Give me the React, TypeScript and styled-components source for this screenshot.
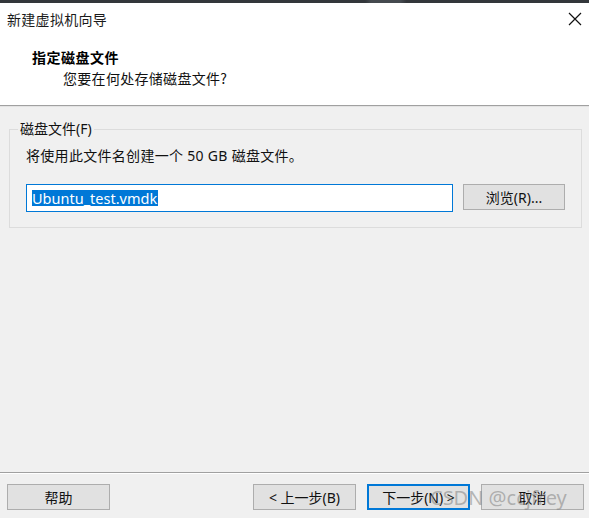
import React from "react";
import styled, { createGlobalStyle } from "styled-components";

const Global = createGlobalStyle`
  html, body { margin: 0; padding: 0; background: #f0f0f0; }
  body { font-family: "Noto Sans", "Noto Sans CJK SC", sans-serif; font-size: 14px; color: #000; }
  * { box-sizing: border-box; }
`;

const Window = styled.div`
  width: 589px;
  height: 518px;
  display: flex;
  flex-direction: column;
  background: #f0f0f0;
  position: relative;
  overflow: hidden;
`;

const TopEdge = styled.div`
  height: 3px;
  background: linear-gradient(90deg, #33373b 0%, #33373b 62%, #454a4f 63%, #454a4f 68%, #33373b 69%, #33373b 100%);
`;

const Top = styled.div`
  background: #fff;
  border-bottom: 1px solid #a0a0a0;
  box-shadow: 0 1px 0 #e3e3e3;
`;

const TitleBar = styled.div`
  height: 34px;
  display: flex;
  align-items: center;
  justify-content: space-between;
  padding: 0 7px 2px 7px;
`;

const TitleText = styled.span`
  font-family: "Noto Sans CJK SC", sans-serif;
  font-size: 14px;
  letter-spacing: 0.3px;
  color: #1a1a1a;
`;

const Close = styled.span`
  display: flex;
  width: 14px;
  height: 14px;
`;

const Header = styled.div`
  padding: 10px 0 16px 32px;
  display: flex;
  flex-direction: column;
`;

const HeaderTitle = styled.div`
  font-family: "Noto Sans CJK SC", sans-serif;
  font-weight: 700;
  font-size: 14px;
  line-height: 21px;
  letter-spacing: 0.5px;
`;

const HeaderSub = styled.div`
  font-family: "Noto Sans CJK SC", sans-serif;
  font-size: 14px;
  line-height: 21px;
  padding-left: 31px;
  letter-spacing: 0.3px;
  color: #111;
`;

const Body = styled.div`
  flex: 1;
  padding-top: 12px;
  border-bottom: 1px solid #a0a0a0;
  box-shadow: 0 1px 0 #fff;
`;

const Group = styled.fieldset`
  margin: 0 7px 0 9px;
  padding: 0 16px 15px 16px;
  border: 1px solid #dcdcdc;
  min-width: 0;
`;

const Legend = styled.legend`
  font-family: "Noto Sans", "Noto Sans CJK SC", sans-serif;
  font-size: 14px;
  line-height: 22px;
  padding: 0 2px;
  margin-left: -8px;
  color: #111;
`;

const Description = styled.div`
  margin-top: 6px;
  line-height: 20px;
  font-family: "Noto Sans", "Noto Sans CJK SC", sans-serif;
  letter-spacing: 0.3px;
  color: #111;
`;

const FileRow = styled.div`
  display: flex;
  align-items: flex-start;
  gap: 10px;
  margin-top: 18px;
`;

const FakeInput = styled.div`
  width: 427px;
  height: 28px;
  border: 1px solid #0078d7;
  background: #fff;
  display: flex;
  align-items: center;
  padding-left: 5px;
`;

const Selected = styled.span`
  background: #0078d7;
  color: #fff;
  font-family: "Noto Sans", sans-serif;
  font-size: 14.5px;
  line-height: 16px;
  height: 16px;
  padding-right: 1px;
`;

const Button = styled.button<{ $primary?: boolean; $width?: number }>`
  width: ${(p) => p.$width ?? 103}px;
  height: 26px;
  padding: 0;
  background: #e1e1e1;
  border: ${(p) => (p.$primary ? "2px solid #0078d7" : "1px solid #adadad")};
  font-family: "Noto Sans", "Noto Sans CJK SC", sans-serif;
  font-size: 14px;
  color: #111;
  display: flex;
  align-items: center;
  justify-content: center;
  flex: none;
`;

const Footer = styled.div`
  height: 45px;
  display: flex;
  align-items: flex-start;
  padding: 11px 5px 0 7px;
  gap: 11px;
`;

const Spacer = styled.div`
  flex: 1;
`;

const Watermark = styled.div`
  position: absolute;
  left: 430px;
  top: 485px;
  font-family: "Noto Sans", sans-serif;
  font-size: 20px;
  line-height: 26px;
  color: rgba(130, 130, 130, 0.55);
  pointer-events: none;
  white-space: nowrap;
`;

export default function App() {
  return (
    <Window>
      <Global />
      <TopEdge />
      <Top>
        <TitleBar>
          <TitleText>新建虚拟机向导</TitleText>
          <Close>
            <svg width="14" height="14" viewBox="0 0 14 14">
              <path d="M1 1 L13 13 M13 1 L1 13" stroke="#111" strokeWidth="1.2" fill="none" />
            </svg>
          </Close>
        </TitleBar>
        <Header>
          <HeaderTitle>指定磁盘文件</HeaderTitle>
          <HeaderSub>您要在何处存储磁盘文件?</HeaderSub>
        </Header>
      </Top>
      <Body>
        <Group>
          <Legend>磁盘文件(F)</Legend>
          <Description>将使用此文件名创建一个 50 GB 磁盘文件。</Description>
          <FileRow>
            <FakeInput>
              <Selected>Ubuntu_test.vmdk</Selected>
            </FakeInput>
            <Button $width={102}>浏览(R)...</Button>
          </FileRow>
        </Group>
      </Body>
      <Footer>
        <Button>帮助</Button>
        <Spacer />
        <Button>&lt; 上一步(B)</Button>
        <Button $primary>下一步(N) &gt;</Button>
        <Button>取消</Button>
      </Footer>
      <Watermark>CSDN @ccjfrey</Watermark>
    </Window>
  );
}
